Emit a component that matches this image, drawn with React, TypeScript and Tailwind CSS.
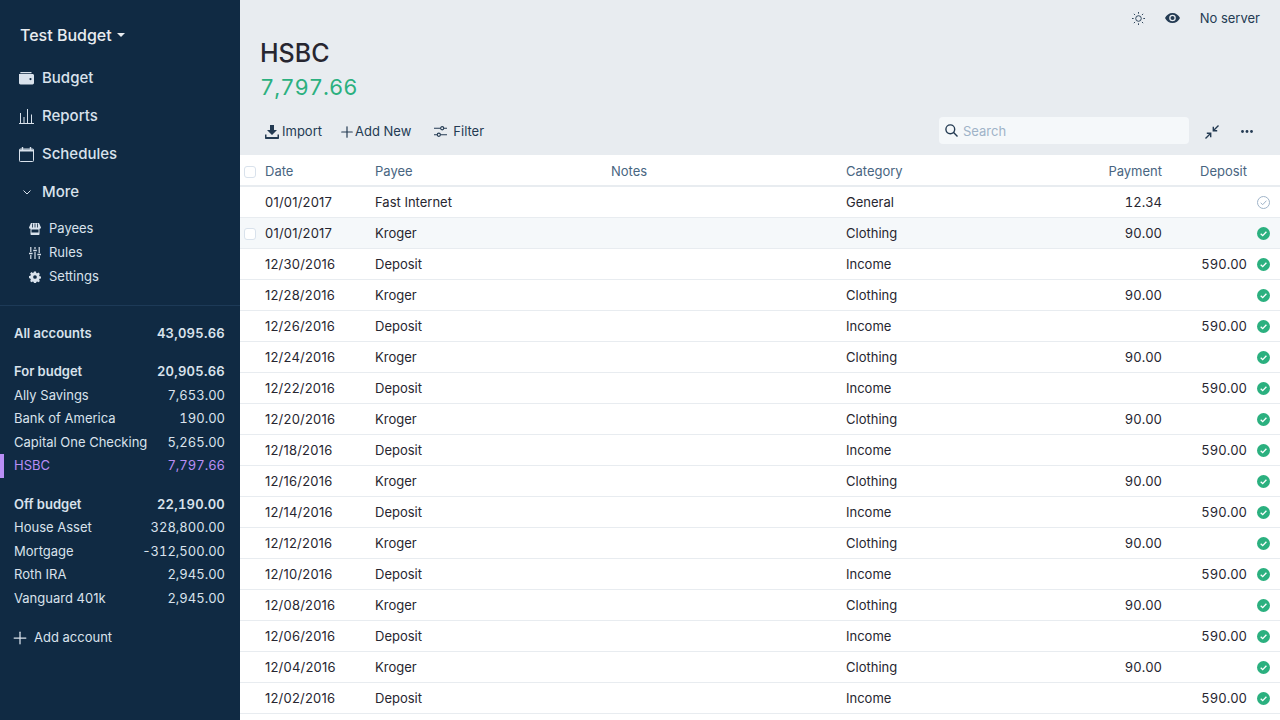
import { Plus } from "lucide-react";

const font = "font-['Inter','Liberation_Sans',sans-serif]";

type Account = { name: string; balance: string };

const forBudget: Account[] = [
  { name: "Ally Savings", balance: "7,653.00" },
  { name: "Bank of America", balance: "190.00" },
  { name: "Capital One Checking", balance: "5,265.00" },
];

const offBudget: Account[] = [
  { name: "House Asset", balance: "328,800.00" },
  { name: "Mortgage", balance: "-312,500.00" },
  { name: "Roth IRA", balance: "2,945.00" },
  { name: "Vanguard 401k", balance: "2,945.00" },
];

type Tx = {
  date: string;
  payee: string;
  category: string;
  payment?: string;
  deposit?: string;
  cleared: boolean;
};

const dates = [
  "12/30/2016",
  "12/28/2016",
  "12/26/2016",
  "12/24/2016",
  "12/22/2016",
  "12/20/2016",
  "12/18/2016",
  "12/16/2016",
  "12/14/2016",
  "12/12/2016",
  "12/10/2016",
  "12/08/2016",
  "12/06/2016",
  "12/04/2016",
  "12/02/2016",
];

const rows: Tx[] = [
  { date: "01/01/2017", payee: "Fast Internet", category: "General", payment: "12.34", cleared: false },
  { date: "01/01/2017", payee: "Kroger", category: "Clothing", payment: "90.00", cleared: true },
  ...dates.map((date, i) =>
    i % 2 === 0
      ? { date, payee: "Deposit", category: "Income", deposit: "590.00", cleared: true }
      : { date, payee: "Kroger", category: "Clothing", payment: "90.00", cleared: true },
  ),
];

function WalletIcon() {
  return (
    <svg viewBox="0 0 15 15" className="h-[15px] w-[15px]" fill="currentColor">
      <path d="M2 1h10.500v1.200H1.200C1.200 1.500 1.500 1 2 1z" />
      <path fillRule="evenodd" d="M0 3h13.500c.8 0 1.500.6 1.500 1.400V12c0 .8-.7 1.400-1.500 1.400H1.500C.7 13.400 0 12.800 0 12zM11.500 7a1.100 1.100 0 1 0 0 2.200 1.100 1.100 0 0 0 0-2.200z" />
    </svg>
  );
}

function BarsIcon() {
  return (
    <svg viewBox="0 0 15 15" className="h-[15px] w-[15px]" fill="none" stroke="currentColor" strokeWidth="1">
      <path d="M0 14.500h15M1.500 4v10.500M5 8v6.500M8.500 0v14.500M12.500 5.500v9" />
    </svg>
  );
}

function CalendarIcon() {
  return (
    <svg viewBox="0 0 15 15" className="h-[15px] w-[15px]" fill="none" stroke="currentColor" strokeWidth="1">
      <rect x="0.500" y="2" width="14" height="12.500" rx="0.800" />
      <path d="M0.500 3.500h14" strokeWidth="2" />
      <path d="M3.500 0v3M11.500 0v3" strokeWidth="1.400" />
    </svg>
  );
}

function StoreIcon() {
  return (
    <svg viewBox="0 0 12 12" className="h-3 w-3" fill="currentColor">
      <path d="M2 0h8l2 4.500c0 .9-.8 1.300-1.500 1.300V11c0 .6-.4 1-1 1h-7c-.6 0-1-.4-1-1V5.800C.8 5.800 0 5.400 0 4.500z" />
      <path d="M3.500 0.500v4M6 0.500v4M8.500 0.500v4" stroke="#102a43" strokeWidth="0.800" />
      <rect x="2.500" y="6.500" width="7" height="3" fill="#102a43" />
    </svg>
  );
}

function SlidersVIcon() {
  return (
    <svg viewBox="0 0 12 12" className="h-3 w-3" fill="none" stroke="currentColor" strokeWidth="1.200">
      <path d="M1.800 0v5M1.800 8v4M6 0v2M6 5v7M10.200 0v6M10.200 9v3" />
      <path d="M0 6.500h3.600M4.200 3.500h3.600M8.400 7.500h3.600" strokeWidth="1.400" />
    </svg>
  );
}

function GearIcon() {
  return (
    <svg viewBox="-1 -1 26 26" className="h-3 w-3" fill="currentColor">
      <path fillRule="evenodd" d="M14.200 0l.6 3.200c.7.2 1.300.5 1.900.9l2.800-1.700 3.100 3.100-1.700 2.800c.4.600.7 1.200.9 1.900l3.200.6v4.400l-3.200.6c-.2.700-.5 1.300-.9 1.900l1.700 2.800-3.100 3.100-2.800-1.700c-.6.400-1.200.7-1.900.9l-.6 3.200H9.800l-.6-3.200c-.7-.2-1.300-.5-1.900-.9l-2.800 1.700-3.100-3.100 1.700-2.800c-.4-.6-.7-1.200-.9-1.900L-1 14.200V9.800l3.200-.6c.2-.7.5-1.300.9-1.900L1.400 4.500l3.100-3.100 2.800 1.700c.6-.4 1.200-.7 1.900-.9L9.800 0zM12 8a4 4 0 1 0 0 8 4 4 0 0 0 0-8z" />
    </svg>
  );
}

function ImportIcon() {
  return (
    <svg viewBox="0 0 14 14" className="h-[14px] w-[14px]" fill="currentColor">
      <path d="M5 0h4v5h3L7 10 2 5h3z" />
      <path d="M0 9.500h1.500V12h11V9.500H14V13c0 .6-.4 1-1 1H1c-.6 0-1-.4-1-1z" />
    </svg>
  );
}

function FilterIcon() {
  return (
    <svg viewBox="0 0 14 14" className="h-[13px] w-[13px]" fill="none" stroke="currentColor" strokeWidth="1.200">
      <path d="M0 3.500h7M10.500 3.500H14M0 10.500h3.500M7 10.500h7" />
      <circle cx="8.800" cy="3.500" r="1.700" />
      <circle cx="5.200" cy="10.500" r="1.700" />
    </svg>
  );
}

function SunIcon() {
  return (
    <svg viewBox="0 0 14 14" className="h-[13px] w-[13px]" fill="none" stroke="currentColor" strokeWidth="1">
      <circle cx="7" cy="7" r="3" />
      <path d="M7 0v1.800M7 12.200V14M0 7h1.800M12.200 7H14M2 2l1.300 1.300M10.700 10.700 12 12M12 2l-1.300 1.300M3.300 10.700 2 12" />
    </svg>
  );
}

function EyeIcon() {
  return (
    <svg viewBox="0 0 15 10" className="h-[10px] w-[15px]" fill="currentColor">
      <path fillRule="evenodd" d="M7.500 0C4.200 0 1.400 2 0 5c1.400 3 4.200 5 7.500 5S13.600 8 15 5c-1.400-3-4.200-5-7.500-5zm0 8.300a3.300 3.300 0 1 1 0-6.600 3.300 3.300 0 0 1 0 6.600z" />
      <circle cx="7.500" cy="5" r="2" />
    </svg>
  );
}

function SearchIcon() {
  return (
    <svg viewBox="0 0 13 13" className="h-[13px] w-[13px]" fill="none" stroke="currentColor" strokeWidth="1.400">
      <circle cx="5.300" cy="5.300" r="4.400" />
      <path d="M8.600 8.600 12.500 12.500" />
    </svg>
  );
}

function CollapseIcon() {
  return (
    <svg viewBox="0 0 14 14" className="h-[14px] w-[14px]" fill="none" stroke="currentColor" strokeWidth="1.400">
      <path d="M13.500.5 8.500 5.500M8.300 1.800v3.900h3.900" />
      <path d="M.5 13.500l5-5M5.700 12.200V8.300H1.800" />
    </svg>
  );
}

function DotsIcon() {
  return (
    <svg viewBox="0 0 12 3" className="h-[3px] w-3" fill="currentColor">
      <circle cx="1.500" cy="1.500" r="1.400" />
      <circle cx="6" cy="1.500" r="1.400" />
      <circle cx="10.500" cy="1.500" r="1.400" />
    </svg>
  );
}

function ClearedIcon({ on }: { on: boolean }) {
  if (on) {
    return (
      <svg viewBox="0 0 13 13" className="h-[13px] w-[13px]">
        <circle cx="6.500" cy="6.500" r="6.500" fill="#2bb07f" />
        <path d="M3.700 6.800 5.700 8.700 9.400 4.700" fill="none" stroke="#fff" strokeWidth="1.300" />
      </svg>
    );
  }
  return (
    <svg viewBox="0 0 13 13" className="h-[13px] w-[13px]">
      <circle cx="6.500" cy="6.500" r="6" fill="none" stroke="#9fb3c8" strokeWidth="1" />
      <path d="M3.700 6.800 5.700 8.700 9.400 4.700" fill="none" stroke="#9fb3c8" strokeWidth="1" />
    </svg>
  );
}

function NavItem({ icon, label }: { icon: React.ReactNode; label: string }) {
  return (
    <div className="flex h-[38px] items-center pl-[19px] text-[15px] font-medium text-[#d9e2ec]">
      <span className="flex w-[23px] shrink-0">{icon}</span>
      {label}
    </div>
  );
}

function SubItem({ icon, label }: { icon: React.ReactNode; label: string }) {
  return (
    <div className="flex h-6 items-center pl-[29px] text-[13px] text-[#d9e2ec]">
      <span className="flex w-5 shrink-0">{icon}</span>
      {label}
    </div>
  );
}

function AccountRow({ name, balance, bold, active }: Account & { bold?: boolean; active?: boolean }) {
  return (
    <div
      className={`relative flex h-[23.5px] items-center justify-between pl-[14px] pr-[15px] text-[13px] ${
        bold ? "font-semibold" : ""
      } ${active ? "text-[#b98ef5]" : "text-[#d9e2ec]"}`}
    >
      {active && <span className="absolute left-0 top-0 h-full w-1 bg-[#b98ef5]" />}
      <span>{name}</span>
      <span className={`tabular-nums ${bold ? "tracking-[0.25px]" : ""}`}>{balance}</span>
    </div>
  );
}

function Sidebar() {
  return (
    <aside className="flex h-full w-60 shrink-0 flex-col bg-[#102a43]">
      <div className="flex h-[59px] shrink-0 items-end pb-[12px] pl-5 text-base font-medium leading-[24px] text-[#e8ecf0]">
        Test Budget
        <span className="mb-[10px] ml-[5px] h-0 w-0 border-x-[4px] border-t-[4px] border-x-transparent border-t-[#e8ecf0]" />
      </div>
      <nav>
        <NavItem icon={<WalletIcon />} label="Budget" />
        <NavItem icon={<BarsIcon />} label="Reports" />
        <NavItem icon={<CalendarIcon />} label="Schedules" />
        <NavItem
          icon={
            <svg viewBox="0 0 8 5" className="ml-1 mt-[1px] h-[5px] w-2" fill="none" stroke="currentColor" strokeWidth="1">
              <path d="M.5.5 4 4 7.500.5" />
            </svg>
          }
          label="More"
        />
      </nav>
      <div className="mt-[6px]">
        <SubItem icon={<StoreIcon />} label="Payees" />
        <SubItem icon={<SlidersVIcon />} label="Rules" />
        <SubItem icon={<GearIcon />} label="Settings" />
      </div>
      <div className="mt-[16px] border-t border-[#1d3a57] pt-[16px]">
        <AccountRow name="All accounts" balance="43,095.66" bold />
        <div className="mt-[14.6px]">
          <AccountRow name="For budget" balance="20,905.66" bold />
          {forBudget.map((a) => (
            <AccountRow key={a.name} {...a} />
          ))}
          <AccountRow name="HSBC" balance="7,797.66" active />
        </div>
        <div className="mt-[15px]">
          <AccountRow name="Off budget" balance="22,190.00" bold />
          {offBudget.map((a) => (
            <AccountRow key={a.name} {...a} />
          ))}
        </div>
        <div className="mt-4 flex h-6 items-center pl-[14px] text-[13px] text-[#d9e2ec]">
          <Plus size={20} strokeWidth={1.5} className="-ml-[4px] mr-[4px]" />
          Add account
        </div>
      </div>
    </aside>
  );
}

function TxRow({ row, hover }: { row: Tx; hover: boolean }) {
  return (
    <div className={`flex h-[31px] items-center border-b border-[#e8ecf0] pt-[2px] text-[13px] text-[#272630] ${hover ? "bg-[#f5f8fa]" : "bg-white"}`}>
      <div className="flex w-[25px] shrink-0 pl-[4px]">
        {hover && <span className="h-3 w-3 rounded-[3px] border border-[#d9e2ec] bg-white" />}
      </div>
      <div className="w-[110px] shrink-0 tracking-[0.2px]">{row.date}</div>
      <div className="w-[236px] shrink-0">{row.payee}</div>
      <div className="w-[235px] shrink-0" />
      <div className="w-[200px] shrink-0">{row.category}</div>
      <div className="w-[116px] shrink-0 text-right tabular-nums">{row.payment}</div>
      <div className="w-[85px] shrink-0 text-right tabular-nums">{row.deposit}</div>
      <div className="mb-[2px] flex flex-1 justify-center pr-[1px]">
        <ClearedIcon on={row.cleared} />
      </div>
    </div>
  );
}

export default function App() {
  return (
    <div className={`flex h-[720px] w-[1280px] overflow-hidden bg-[#e8ecf0] ${font}`}>
      <Sidebar />
      <main className="flex min-w-0 flex-1 flex-col">
        <div className="flex h-9 shrink-0 items-center justify-end pr-[20px] text-[13px] text-[#243b53]">
          <span className="mr-[-1px] text-[#243b53]">
            <SunIcon />
          </span>
          <span className="ml-[21px] text-[#243b53]">
            <EyeIcon />
          </span>
          <span className="ml-[20px] mt-[2px]">No server</span>
        </div>
        <div className="shrink-0 pl-5">
          <div className="h-[34px] text-[25px] font-medium leading-[34px] text-[#272630]">HSBC</div>
          <div className="mt-[1px] text-[22px] font-normal leading-[32px] tabular-nums text-[#2bb07f]">7,797.66</div>
        </div>
        <div className="mb-[1px] mt-[6px] flex h-[45px] shrink-0 items-center pl-[25px] pr-[27px] text-[13px] text-[#243b53]">
          <ImportIcon />
          <span className="ml-[3px]">Import</span>
          <Plus size={18} strokeWidth={1.6} className="ml-4" />
          <span className="-ml-[1px]">Add New</span>
          <span className="ml-[23px]">
            <FilterIcon />
          </span>
          <span className="ml-[6px]">Filter</span>
          <div className="mb-[2px] ml-auto flex h-[27px] w-[250px] items-center rounded bg-[#f5f8fa] pl-[6px] text-[#9fb3c8]">
            <span className="text-[#243b53]">
              <SearchIcon />
            </span>
            <span className="ml-[5px] mt-[2px]">Search</span>
          </div>
          <span className="ml-4 text-[#243b53]">
            <CollapseIcon />
          </span>
          <span className="ml-[22px] text-[#243b53]">
            <DotsIcon />
          </span>
        </div>
        <div className="flex-1 overflow-hidden bg-white">
          <div className="flex h-[32px] items-center border-b-2 border-[#e8ecf0] pt-[4px] text-[13px] text-[#486581]">
            <div className="flex w-[25px] shrink-0 pl-[4px]">
              <span className="h-3 w-3 rounded-[3px] border border-[#d9e2ec] bg-white" />
            </div>
            <div className="w-[110px] shrink-0">Date</div>
            <div className="w-[236px] shrink-0">Payee</div>
            <div className="w-[235px] shrink-0">Notes</div>
            <div className="w-[200px] shrink-0">Category</div>
            <div className="w-[116px] shrink-0 text-right">Payment</div>
            <div className="w-[85px] shrink-0 text-right">Deposit</div>
          </div>
          {rows.map((row, i) => (
            <TxRow key={i} row={row} hover={i === 1} />
          ))}
        </div>
      </main>
    </div>
  );
}
